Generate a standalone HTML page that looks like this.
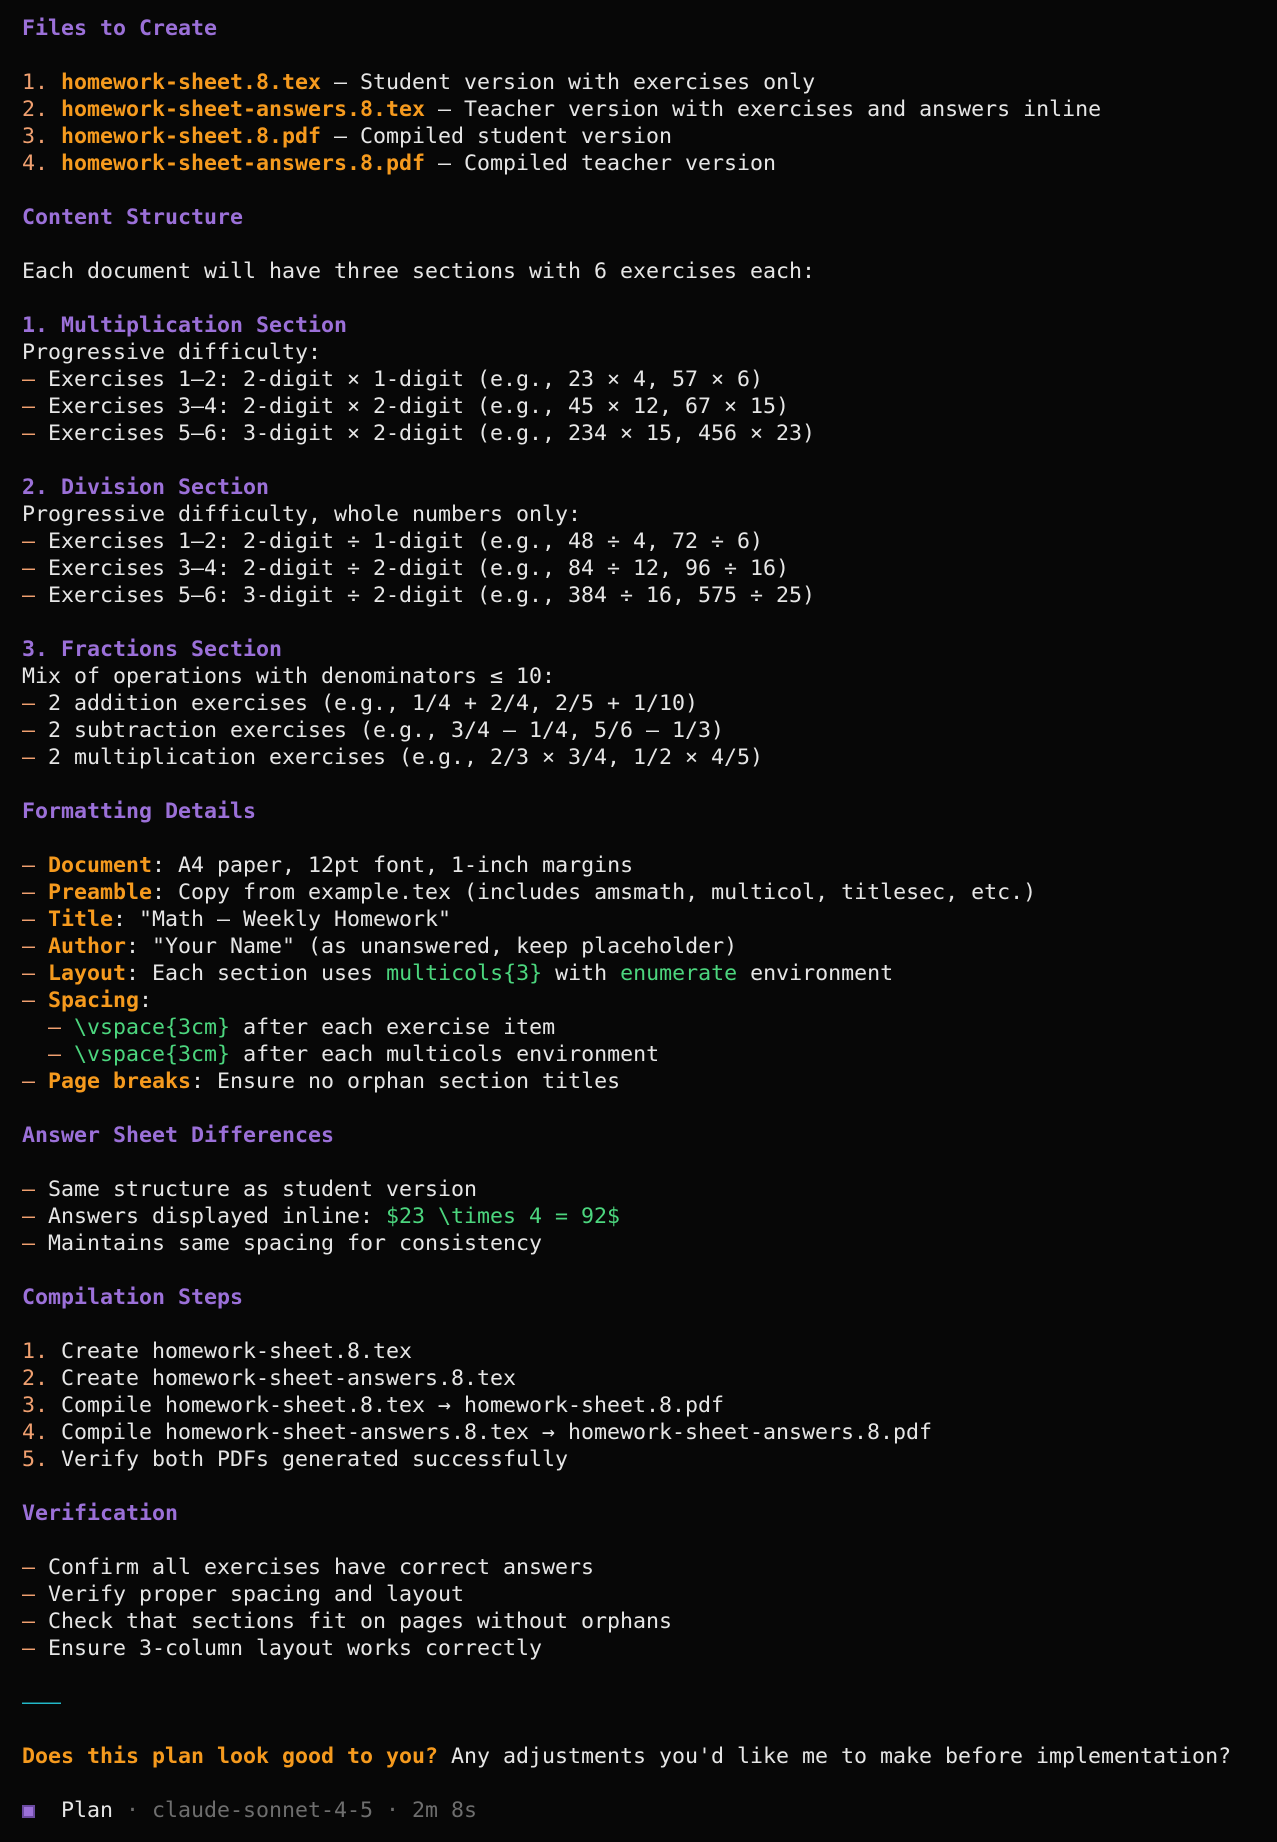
<!DOCTYPE html>
<html><head><meta charset="utf-8">
<style>
html,body{margin:0;padding:0;background:#070707;}
body{width:1277px;height:1842px;overflow:hidden;}
pre{margin:0;padding:15px 0 0 22px;font-family:"DejaVu Sans Mono","Liberation Mono",monospace;font-size:21.6px;line-height:27px;color:#e6e6e6;white-space:pre;}
.h{color:#9b70d8;font-weight:bold;}
.n{color:#f0a070;}
.o{color:#f59a1e;font-weight:bold;}
.g{color:#4cd67e;}
.c{color:#22b8c8;}
.gr{color:#6e6e6e;}
.sq{display:inline-block;width:9px;height:9px;background:#9b70d8;border:2px solid #6a4aa0;vertical-align:-1px;}
</style></head><body><pre><span class="h">Files to Create</span>

<span class="n">1.</span> <span class="o">homework-sheet.8.tex</span> – Student version with exercises only
<span class="n">2.</span> <span class="o">homework-sheet-answers.8.tex</span> – Teacher version with exercises and answers inline
<span class="n">3.</span> <span class="o">homework-sheet.8.pdf</span> – Compiled student version
<span class="n">4.</span> <span class="o">homework-sheet-answers.8.pdf</span> – Compiled teacher version

<span class="h">Content Structure</span>

Each document will have three sections with 6 exercises each:

<span class="h">1. Multiplication Section</span>
Progressive difficulty:
<span class="n">–</span> Exercises 1–2: 2-digit × 1-digit (e.g., 23 × 4, 57 × 6)
<span class="n">–</span> Exercises 3–4: 2-digit × 2-digit (e.g., 45 × 12, 67 × 15)
<span class="n">–</span> Exercises 5–6: 3-digit × 2-digit (e.g., 234 × 15, 456 × 23)

<span class="h">2. Division Section</span>
Progressive difficulty, whole numbers only:
<span class="n">–</span> Exercises 1–2: 2-digit ÷ 1-digit (e.g., 48 ÷ 4, 72 ÷ 6)
<span class="n">–</span> Exercises 3–4: 2-digit ÷ 2-digit (e.g., 84 ÷ 12, 96 ÷ 16)
<span class="n">–</span> Exercises 5–6: 3-digit ÷ 2-digit (e.g., 384 ÷ 16, 575 ÷ 25)

<span class="h">3. Fractions Section</span>
Mix of operations with denominators ≤ 10:
<span class="n">–</span> 2 addition exercises (e.g., 1/4 + 2/4, 2/5 + 1/10)
<span class="n">–</span> 2 subtraction exercises (e.g., 3/4 – 1/4, 5/6 – 1/3)
<span class="n">–</span> 2 multiplication exercises (e.g., 2/3 × 3/4, 1/2 × 4/5)

<span class="h">Formatting Details</span>

<span class="n">–</span> <span class="o">Document</span>: A4 paper, 12pt font, 1-inch margins
<span class="n">–</span> <span class="o">Preamble</span>: Copy from example.tex (includes amsmath, multicol, titlesec, etc.)
<span class="n">–</span> <span class="o">Title</span>: "Math – Weekly Homework"
<span class="n">–</span> <span class="o">Author</span>: "Your Name" (as unanswered, keep placeholder)
<span class="n">–</span> <span class="o">Layout</span>: Each section uses <span class="g">multicols{3}</span> with <span class="g">enumerate</span> environment
<span class="n">–</span> <span class="o">Spacing</span>:
  <span class="n">–</span> <span class="g">\vspace{3cm}</span> after each exercise item
  <span class="n">–</span> <span class="g">\vspace{3cm}</span> after each multicols environment
<span class="n">–</span> <span class="o">Page breaks</span>: Ensure no orphan section titles

<span class="h">Answer Sheet Differences</span>

<span class="n">–</span> Same structure as student version
<span class="n">–</span> Answers displayed inline: <span class="g">$23 \times 4 = 92$</span>
<span class="n">–</span> Maintains same spacing for consistency

<span class="h">Compilation Steps</span>

<span class="n">1.</span> Create homework-sheet.8.tex
<span class="n">2.</span> Create homework-sheet-answers.8.tex
<span class="n">3.</span> Compile homework-sheet.8.tex → homework-sheet.8.pdf
<span class="n">4.</span> Compile homework-sheet-answers.8.tex → homework-sheet-answers.8.pdf
<span class="n">5.</span> Verify both PDFs generated successfully

<span class="h">Verification</span>

<span class="n">–</span> Confirm all exercises have correct answers
<span class="n">–</span> Verify proper spacing and layout
<span class="n">–</span> Check that sections fit on pages without orphans
<span class="n">–</span> Ensure 3-column layout works correctly

<span class="c">–––</span>

<span class="o">Does this plan look good to you?</span> Any adjustments you'd like me to make before implementation?

<span class="sq"></span>  Plan <span class="gr">· claude-sonnet-4-5 · 2m 8s</span></pre></body></html>
